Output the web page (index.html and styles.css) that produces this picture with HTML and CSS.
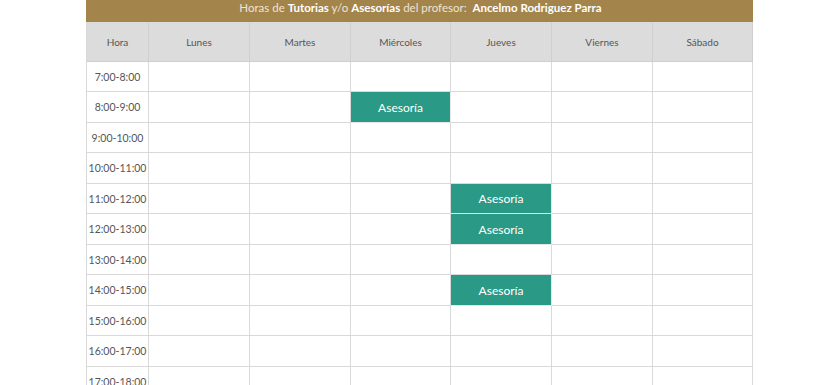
FILE: index.html
```html
<!DOCTYPE html>
<html lang="es">
<head>
<meta charset="utf-8">
<title>Horario</title>
<link rel="stylesheet" href="styles.css">
</head>
<body>
<div class="wrap">
  <div class="title">Horas de <b>Tutorias</b> y/o <b>Asesorías</b> del profesor: &nbsp;<b>Ancelmo Rodriguez Parra</b></div>
  <table class="sched">
    <colgroup>
      <col class="c-hora"><col class="c-day"><col class="c-day"><col class="c-day2"><col class="c-day"><col class="c-day"><col class="c-day2">
    </colgroup>
    <thead>
      <tr><th>Hora</th><th>Lunes</th><th>Martes</th><th>Miércoles</th><th>Jueves</th><th>Viernes</th><th>Sábado</th></tr>
    </thead>
    <tbody>
      <tr class="ra"><td>7:00-8:00</td><td></td><td></td><td></td><td></td><td></td><td></td></tr>
      <tr class="rb"><td>8:00-9:00</td><td></td><td></td><td class="ase">Asesoría</td><td></td><td></td><td></td></tr>
      <tr class="ra"><td>9:00-10:00</td><td></td><td></td><td></td><td></td><td></td><td></td></tr>
      <tr class="rb"><td>10:00-11:00</td><td></td><td></td><td></td><td></td><td></td><td></td></tr>
      <tr class="ra"><td>11:00-12:00</td><td></td><td></td><td></td><td class="ase">Asesoría</td><td></td><td></td></tr>
      <tr class="rb"><td>12:00-13:00</td><td></td><td></td><td></td><td class="ase">Asesoría</td><td></td><td></td></tr>
      <tr class="ra"><td>13:00-14:00</td><td></td><td></td><td></td><td></td><td></td><td></td></tr>
      <tr class="rb"><td>14:00-15:00</td><td></td><td></td><td></td><td class="ase">Asesoría</td><td></td><td></td></tr>
      <tr class="ra"><td>15:00-16:00</td><td></td><td></td><td></td><td></td><td></td><td></td></tr>
      <tr class="rb"><td>16:00-17:00</td><td></td><td></td><td></td><td></td><td></td><td></td></tr>
      <tr class="ra"><td>17:00-18:00</td><td></td><td></td><td></td><td></td><td></td><td></td></tr>
    </tbody>
  </table>
</div>
</body>
</html>
```
FILE: styles.css
```css
html, body {
  margin: 0;
  padding: 0;
  background: #ffffff;
}
body {
  font-family: Lato, "Open Sans", sans-serif;
  color: #555555;
  overflow: hidden;
}
.wrap {
  width: 667px;
  margin-left: 86px;
}
.title {
  height: 22px;
  background: #a3844b;
  color: #ede5d4;
  font-size: 11.5px;
  line-height: 15px;
  text-align: center;
  box-sizing: border-box;
  padding-left: 2px;
}
.title b {
  color: #ffffff;
  font-weight: 700;
}
.sched {
  width: 667px;
  border-collapse: separate;
  border-spacing: 0;
  table-layout: fixed;
  font-size: 10.5px;
}
.c-hora { width: 63px; }
.c-day { width: 101px; }
.c-day2 { width: 100px; }
.sched th,
.sched td {
  box-sizing: border-box;
  padding: 0;
  text-align: center;
  border-right: 1px solid #d9d9d9;
  border-bottom: 1px solid #d9d9d9;
}
.sched th:first-child,
.sched td:first-child {
  border-left: 1px solid #d9d9d9;
}
.sched th {
  background: #dcdcdc;
  font-weight: 400;
  font-size: 10px;
  color: #555555;
  height: 40px;
  border-color: #cfcfcf;
}
.sched td {
  color: #555555;
}
.sched tr.ra td { height: 30px; }
.sched tr.rb td { height: 31px; }
.sched td.ase {
  background: #2a9985;
  color: #ffffff;
  font-size: 12px;
  border-color: #e6e6e6;
}
```
